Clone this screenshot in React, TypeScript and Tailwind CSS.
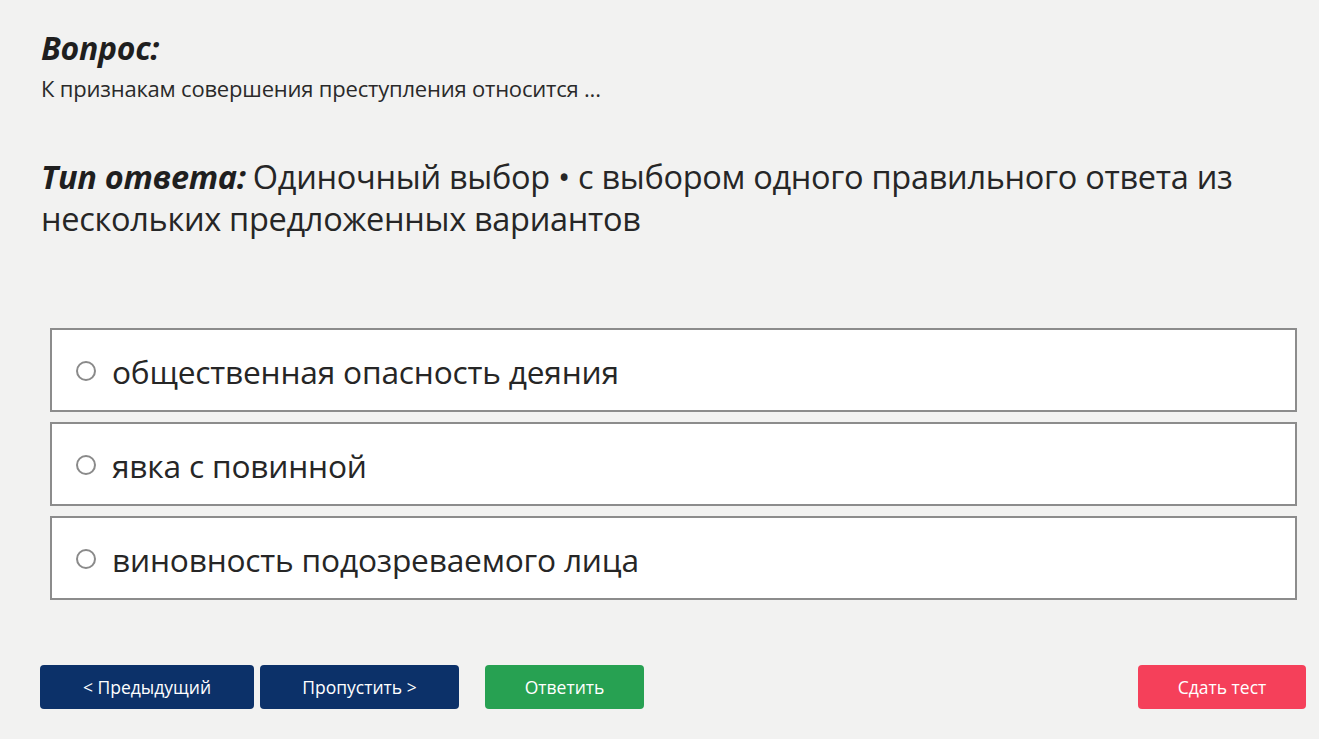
const options = [
  'общественная опасность деяния',
  'явка с повинной',
  'виновность подозреваемого лица',
]

export default function App() {
  return (
    <main
      className="bg-[#f2f2f1] text-[#222] min-h-screen w-full flex flex-col"
      style={{ fontFamily: '"Open Sans", "Noto Sans", sans-serif' }}
    >
      <div className="pl-[41px] pr-[40px] pt-[28px]">
        <h1 className="text-[32px] leading-[40px] font-bold italic text-[#1f1f1f] tracking-[-0.3px]">Вопрос:</h1>
        <p className="text-[22px] leading-[28px] mt-[6px] text-[#2a2a2a] tracking-[-0.2px]">
          К признакам совершения преступления относится ...
        </p>
        <p className="mt-[54px] text-[32.5px] leading-[42px] text-[#262626] tracking-[-0.3px]">
          <span className="font-bold italic text-[#1f1f1f] mr-[7px]">Тип ответа:</span>Одиночный выбор • с выбором одного правильного ответа из нескольких предложенных вариантов
        </p>
      </div>

      <div className="mt-[88px] ml-[50px] mr-[22px] flex flex-col gap-[10px]">
        {options.map((o) => (
          <label
            key={o}
            className="h-[84px] bg-white border-2 border-[#8c8c8c] flex items-center pl-[24px] gap-[16px] cursor-pointer"
          >
            <span className="w-[20px] h-[20px] rounded-full border-2 border-[#8a8a8a] bg-white shrink-0 mt-[2px]" />
            <span className="text-[31.7px] leading-[40px] text-[#262626] tracking-[-0.2px] mt-[4px]">{o}</span>
          </label>
        ))}
      </div>

      <div className="mt-[65px] pl-[40px] pr-[13px] flex items-center">
        <button className="w-[214px] h-[44px] rounded-[4px] bg-[#0c3169] text-white text-[17.5px]">
          &lt; Предыдущий
        </button>
        <button className="ml-[6px] w-[199px] h-[44px] rounded-[4px] bg-[#0c3169] text-white text-[17.5px]">
          Пропустить &gt;
        </button>
        <button className="ml-[26px] w-[159px] h-[44px] rounded-[4px] bg-[#27a152] text-white text-[17.5px]">
          Ответить
        </button>
        <button className="ml-auto w-[168px] h-[44px] rounded-[4px] bg-[#f5405a] text-white text-[17.5px]">
          Сдать тест
        </button>
      </div>
    </main>
  )
}
